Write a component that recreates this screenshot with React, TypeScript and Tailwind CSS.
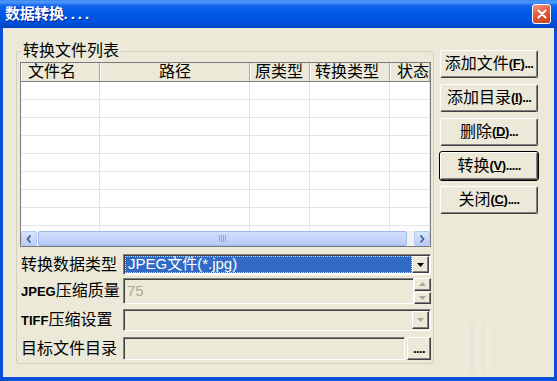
import React from 'react';

const raised =
  'bg-[#ece9d8] border border-t-white border-l-white border-r-[#404040] border-b-[#404040] shadow-[inset_-1px_-1px_0_#808080]';
const sunken =
  'border border-t-[#808080] border-l-[#808080] border-b-white border-r-white shadow-[inset_1px_1px_0_#404040]';

const columns = [
  { title: '文件名', w: 'w-[79px]', align: 'justify-start pl-[6px]' },
  { title: '路径', w: 'w-[150px]', align: 'justify-center' },
  { title: '原类型', w: 'w-[60px]', align: 'justify-start pl-[4px]' },
  { title: '转换类型', w: 'w-[80px]', align: 'justify-start pl-[4px]' },
  { title: '状态', w: 'w-[40px]', align: 'justify-start pl-[6px]' },
];

function Arrow({ dir, color }: { dir: 'down' | 'up'; color: string }) {
  return (
    <svg width="7" height="4" viewBox="0 0 7 4">
      {dir === 'down' ? (
        <polygon points="0,0 7,0 3.5,4" fill={color} />
      ) : (
        <polygon points="0,4 7,4 3.5,0" fill={color} />
      )}
    </svg>
  );
}

function ActionButton({ label, hot, dots, isDefault }: { label: string; hot: string; dots: string; isDefault?: boolean }) {
  return (
    <button
      className={`${raised} h-[28px] w-[98px] rounded-[2px] flex items-center justify-center text-[16px] text-black ${
        isDefault ? 'outline outline-black' : ''
      }`}
    >
      <span>{label}</span>
      <span className="font-bold text-[13px] tracking-tight">
        (<span className="underline">{hot}</span>)
      </span>
      <span className="font-bold text-[13px] tracking-tighter">{dots}</span>
    </button>
  );
}

function ListView() {
  const rows = Array.from({ length: 9 });
  return (
    <div className="w-[411px] h-[185px] border border-[#7a7a7a] bg-white flex flex-col">
      {/* header */}
      <div className="h-[19px] flex bg-[#ece9d8] border-b border-b-[#808080]">
        {columns.map((c) => (
          <div
            key={c.title}
            className={`${c.w} h-full flex items-center ${c.align} border-l border-l-white border-r border-r-[#aca899] text-[16px] leading-none`}
          >
            {c.title}
          </div>
        ))}
      </div>
      {/* rows */}
      <div className="flex-1 overflow-hidden">
        {rows.map((_, i) => (
          <div key={i} className="h-[18px] flex border-b border-b-[#e4e4e4]">
            {columns.map((c) => (
              <div key={c.title} className={`${c.w} h-full border-r border-r-[#e4e4e4]`} />
            ))}
          </div>
        ))}
      </div>
      {/* horizontal scrollbar */}
      <div className="h-[15px] flex bg-[#f3f2ec]">
        <div className="w-[16px] h-full rounded-[2px] bg-[linear-gradient(180deg,#d8e4fd,#b9cdf8)] border border-[#b4c8f4] flex items-center justify-center">
          <svg width="6" height="8" viewBox="0 0 6 8">
            <polyline points="4.5,0.5 1.5,4 4.5,7.5" fill="none" stroke="#4d6185" strokeWidth="1.8" />
          </svg>
        </div>
        <div className="flex-1 ml-[1px] mr-[7px] rounded-[2px] bg-[linear-gradient(180deg,#d2defc,#b8cbf6)] border border-[#9fb6ec] flex items-center justify-center gap-[1px]">
          {[0, 1, 2, 3].map((k) => (
            <div key={k} className="w-[1px] h-[7px] bg-[#eef3fe] border-r border-r-[#8ca6e0]" />
          ))}
        </div>
        <div className="w-[16px] h-full rounded-[2px] bg-[linear-gradient(180deg,#d8e4fd,#b9cdf8)] border border-[#b4c8f4] flex items-center justify-center">
          <svg width="6" height="8" viewBox="0 0 6 8">
            <polyline points="1.5,0.5 4.5,4 1.5,7.5" fill="none" stroke="#4d6185" strokeWidth="1.8" />
          </svg>
        </div>
      </div>
    </div>
  );
}

function FormRow({ label, children, className }: { label: React.ReactNode; children: React.ReactNode; className: string }) {
  return (
    <div className={`flex items-center ${className}`}>
      <div className="w-[103px] pl-[1px] text-[16px] leading-none whitespace-nowrap">{label}</div>
      {children}
    </div>
  );
}

export default function App() {
  return (
    <div className="w-[557px] h-[381px] bg-[#0b4fd9] flex flex-col font-['Liberation_Sans','Noto_Sans_CJK_SC',sans-serif] text-black overflow-hidden">
      {/* Title bar */}
      <div className="h-[28px] shrink-0 flex items-center justify-between bg-[linear-gradient(180deg,#3a86f2_0px,#4e98f8_2px,#1262ea_6px,#0058e6_14px,#0052df_22px,#0040c4_28px)]">
        <span className="pl-[5px] text-white font-bold text-[15px] [text-shadow:1px_1px_0_#0a1e8c] tracking-tight">
          数据转换<span className="tracking-[3px]">....</span>
        </span>
        <div className="mr-[6px] w-[19px] h-[20px] rounded-[3px] border border-white bg-[linear-gradient(160deg,#f09a80,#e25b3e_45%,#c8401f)] flex items-center justify-center">
          <svg width="10" height="10" viewBox="0 0 10 10">
            <path d="M1.5 1.5 L8.5 8.5 M8.5 1.5 L1.5 8.5" stroke="white" strokeWidth="2" strokeLinecap="round" />
          </svg>
        </div>
      </div>

      {/* Body */}
      <div className="flex-1 mx-[3px] mb-[4px] bg-[#ece9d8] flex pl-[13px] pt-[13px]">
        {/* Group box */}
        <fieldset className="w-[418px] h-[323px] border border-[#d0d0bf] rounded-[3px] pl-[3px] pt-[1px]">
          <legend className="ml-[1px] px-[2px] text-[16px] leading-[20px]">转换文件列表</legend>
          <ListView />

          <FormRow label="转换数据类型" className="mt-[7px] h-[21px]">
            <div className={`${sunken} w-[308px] h-full flex bg-white p-[1px]`}>
              <div className="flex-1 bg-[#316ac5] outline outline-dotted outline-[#f6d96b] -outline-offset-1 flex items-center pl-[3px] text-white text-[15px]">
                JPEG文件(*.jpg)
              </div>
              <div className={`${raised} w-[17px] h-full flex items-center justify-center`}>
                <Arrow dir="down" color="#000" />
              </div>
            </div>
          </FormRow>

          <FormRow
            label={
              <>
                <span className="font-bold text-[13px]">JPEG</span>压缩质量
              </>
            }
            className="mt-[3px] h-[26px]"
          >
            <div className="w-[308px] h-full flex">
              <div className={`${sunken} flex-1 h-full flex items-center pl-[3px] text-[15px] text-[#aca899]`}>75</div>
              <div className="w-[17px] h-full flex flex-col gap-[1px]">
                <div className={`${raised} flex-1 flex items-center justify-center`}>
                  <Arrow dir="up" color="#aca899" />
                </div>
                <div className={`${raised} flex-1 flex items-center justify-center`}>
                  <Arrow dir="down" color="#aca899" />
                </div>
              </div>
            </div>
          </FormRow>

          <FormRow
            label={
              <>
                <span className="font-bold text-[13px]">TIFF</span>压缩设置
              </>
            }
            className="mt-[5px] h-[22px]"
          >
            <div className={`${sunken} w-[308px] h-full flex p-[1px]`}>
              <div className="flex-1" />
              <div className={`${raised} w-[17px] h-full flex items-center justify-center`}>
                <Arrow dir="down" color="#aca899" />
              </div>
            </div>
          </FormRow>

          <FormRow label="目标文件目录" className="mt-[6px] h-[23px]">
            <div className="w-[308px] h-full flex gap-[2px]">
              <div className={`${sunken} flex-1 h-full`} />
              <div className={`${raised} w-[24px] h-full flex items-end justify-center pb-[4px] font-bold text-[13px] leading-none tracking-tighter`}>
                ....
              </div>
            </div>
          </FormRow>
        </fieldset>

        {/* Buttons */}
        <div className="ml-[6px] mt-[9px] flex flex-col gap-[6px]">
          <ActionButton label="添加文件" hot="F" dots="..." />
          <ActionButton label="添加目录" hot="I" dots="..." />
          <ActionButton label="删除" hot="D" dots="..." />
          <ActionButton label="转换" hot="V" dots="....." isDefault />
          <ActionButton label="关闭" hot="C" dots="...." />
          <div className="mt-[104px] ml-[25px] flex gap-[3px] h-[48px] opacity-30">
            <div className="w-[3px] bg-[#f7f5ee]" />
            <div className="w-[2px] bg-[#dedbcc]" />
            <div className="w-[3px] bg-[#f7f5ee]" />
            <div className="w-[2px] bg-[#dedbcc]" />
            <div className="w-[3px] bg-[#f7f5ee]" />
          </div>
        </div>
      </div>
    </div>
  );
}
